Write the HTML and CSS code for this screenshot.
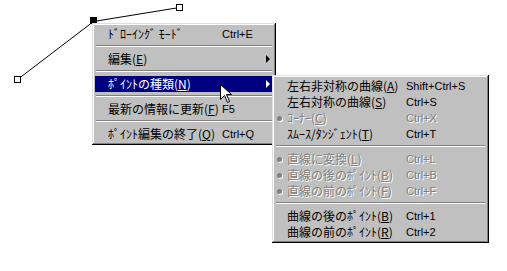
FILE: index.html
```html
<!DOCTYPE html>
<html lang="ja">
  <head>
    <meta charset="UTF-8" />
    <title>ポイントの種類</title>
    <link rel="stylesheet" href="styles.css">
  </head>
  <body>
    <div class="canvas">
      <!-- path being edited -->
      <svg class="drawing" width="507" height="271">
        <line x1="17.5" y1="79.5" x2="93.5" y2="21.5" stroke="#000" />
        <line x1="93.5" y1="21.5" x2="179.5" y2="7.5" stroke="#000" />
        <rect x="14.5" y="76.5" width="6" height="6" fill="#fff" stroke="#000" />
        <rect x="176.5" y="4.5" width="6" height="6" fill="#fff" stroke="#000" />
        <rect x="90" y="17" width="7" height="7" fill="#000" />
      </svg>

      <div class="menu main-menu">
        <div class="item">
          <span class="label">ﾄﾞﾛｰｲﾝｸﾞ ﾓｰﾄﾞ</span>
          <span class="key">Ctrl+E</span>
        </div>
        <div class="sep"></div>
        <div class="item">
          <span class="label">編集(<u>E</u>)</span>
          <span class="arrow"></span>
        </div>
        <div class="sep"></div>
        <div class="item active">
          <span class="label">ﾎﾟｲﾝﾄの種類(<u>N</u>)</span>
          <span class="arrow"></span>
        </div>
        <div class="sep"></div>
        <div class="item">
          <span class="label">最新の情報に更新(<u>F</u>)</span>
          <span class="key">F5</span>
        </div>
        <div class="sep"></div>
        <div class="item">
          <span class="label">ﾎﾟｲﾝﾄ編集の終了(<u>Q</u>)</span>
          <span class="key">Ctrl+Q</span>
        </div>
      </div>

      <div class="menu sub-menu">
        <div class="item">
          <span class="mark"></span>
          <span class="label">左右非対称の曲線(<u>A</u>)</span>
          <span class="key">Shift+Ctrl+S</span>
        </div>
        <div class="item">
          <span class="mark"></span>
          <span class="label">左右対称の曲線(<u>S</u>)</span>
          <span class="key">Ctrl+S</span>
        </div>
        <div class="item disabled">
          <span class="mark"><i class="dot"></i></span>
          <span class="label">ｺｰﾅｰ(<u>C</u>)</span>
          <span class="key">Ctrl+X</span>
        </div>
        <div class="item">
          <span class="mark"></span>
          <span class="label">ｽﾑｰｽ/ﾀﾝｼﾞｪﾝﾄ(<u>T</u>)</span>
          <span class="key">Ctrl+T</span>
        </div>
        <div class="sep"></div>
        <div class="item disabled">
          <span class="mark"><i class="dot"></i></span>
          <span class="label">直線に変換(<u>L</u>)</span>
          <span class="key">Ctrl+L</span>
        </div>
        <div class="item disabled">
          <span class="mark"><i class="dot"></i></span>
          <span class="label">直線の後のﾎﾟｲﾝﾄ(<u>B</u>)</span>
          <span class="key">Ctrl+B</span>
        </div>
        <div class="item disabled">
          <span class="mark"><i class="dot"></i></span>
          <span class="label">直線の前のﾎﾟｲﾝﾄ(<u>F</u>)</span>
          <span class="key">Ctrl+F</span>
        </div>
        <div class="sep"></div>
        <div class="item">
          <span class="mark"></span>
          <span class="label">曲線の後のﾎﾟｲﾝﾄ(<u>B</u>)</span>
          <span class="key">Ctrl+1</span>
        </div>
        <div class="item">
          <span class="mark"></span>
          <span class="label">曲線の前のﾎﾟｲﾝﾄ(<u>R</u>)</span>
          <span class="key">Ctrl+2</span>
        </div>
      </div>

      <!-- mouse pointer -->
      <svg class="pointer" width="13" height="20">
        <path d="M0.5 0.5 L0.5 15.5 L4.5 11.5 L7.5 18.5 L9.5 17.5 L6.5 10.5 L11.5 10.5 Z" fill="#fff" stroke="#000" />
      </svg>
    </div>
  </body>
</html>
```

FILE: styles.css
```css
* {
  margin: 0;
  padding: 0;
  box-sizing: border-box;
}

body {
  background-color: #fff;
  overflow: hidden;
}

.canvas {
  position: relative;
  width: 507px;
  height: 271px;
}

.drawing {
  position: absolute;
  left: 0;
  top: 0;
}

/* win95 style popup menus */
.menu {
  position: absolute;
  display: flex;
  flex-direction: column;
  padding: 3px;
  background-color: #c0c0c0;
  box-shadow: inset -1px -1px #000, inset 1px 1px #dfdfdf,
    inset -2px -2px #808080, inset 2px 2px #fff;
  font-family: "Noto Sans CJK JP", sans-serif;
  font-size: 12px;
  color: #000;
}

.main-menu {
  left: 92px;
  top: 23px;
  width: 184px;
}

.sub-menu {
  left: 272px;
  top: 75px;
  width: 217px;
}

.item {
  display: flex;
  align-items: center;
  height: 16px;
  line-height: 16px;
  white-space: nowrap;
}

.item u {
  text-decoration-thickness: 1px;
  text-underline-offset: 1px;
}

.key {
  font-family: "Liberation Sans", Arial, sans-serif;
  font-size: 11px;
}

.main-menu .item {
  padding-left: 13px;
}

.main-menu .label {
  width: 114px;
}

.arrow {
  margin-left: auto;
  margin-right: 3px;
  width: 0;
  height: 0;
  border-top: 4px solid transparent;
  border-bottom: 4px solid transparent;
  border-left: 4px solid #000;
}

.item.active {
  background-color: #000080;
  color: #fff;
}

.item.active .arrow {
  border-left-color: #fff;
}

.sub-menu .mark {
  width: 12px;
  height: 16px;
  display: flex;
  align-items: center;
}

.sub-menu .label {
  width: 119px;
}

.dot {
  display: block;
  width: 5px;
  height: 5px;
  margin-left: 2px;
  border-radius: 50%;
  background-color: #808080;
  box-shadow: 1px 1px #fff;
}

.item.disabled {
  color: #808080;
  text-shadow: 1px 1px #fff;
}

.sep {
  height: 9px;
  margin: 0 1px;
  padding-top: 3px;
}

.sep::before {
  content: "";
  display: block;
  border-top: 1px solid #808080;
  border-bottom: 1px solid #fff;
}

.pointer {
  position: absolute;
  left: 220px;
  top: 84px;
}
```
